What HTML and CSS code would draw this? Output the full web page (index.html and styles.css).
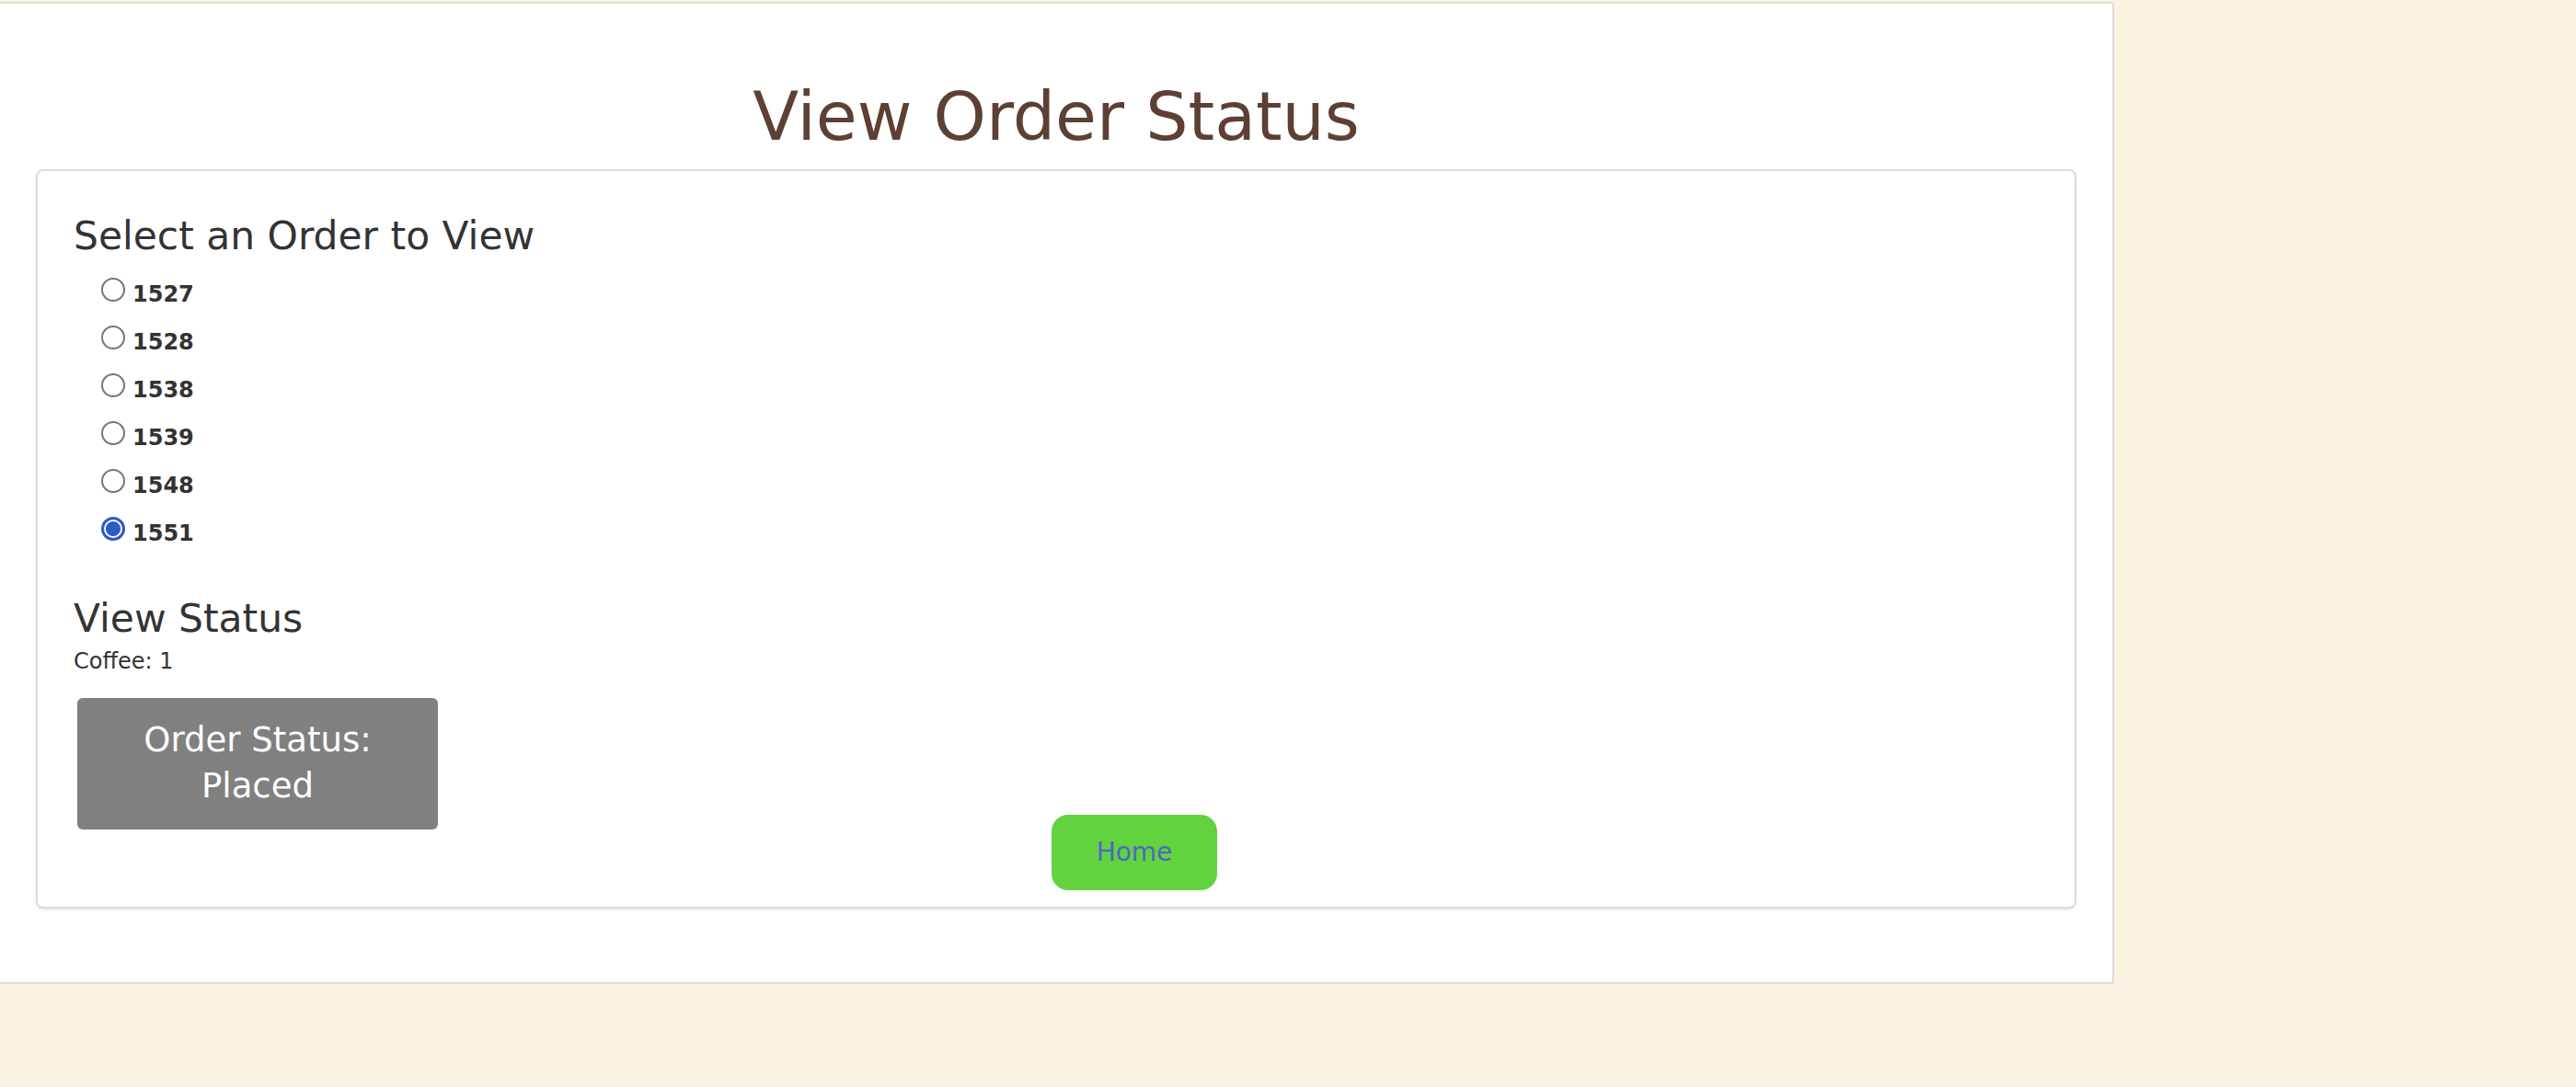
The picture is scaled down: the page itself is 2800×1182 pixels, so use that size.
FILE: index.html
```html
<!DOCTYPE html>
<html lang="en">
<head>
<meta charset="utf-8">
<title>View Order Status</title>
<link rel="stylesheet" href="styles.css">
</head>
<body>
<div class="page">
  <h1 class="title">View Order Status</h1>
  <div class="card">
    <h2 class="section-title">Select an Order to View</h2>
    <div class="orders">
      <label class="order"><input type="radio" name="order" value="1527"><span>1527</span></label>
      <label class="order"><input type="radio" name="order" value="1528"><span>1528</span></label>
      <label class="order"><input type="radio" name="order" value="1538"><span>1538</span></label>
      <label class="order"><input type="radio" name="order" value="1539"><span>1539</span></label>
      <label class="order"><input type="radio" name="order" value="1548"><span>1548</span></label>
      <label class="order"><input type="radio" name="order" value="1551" checked><span>1551</span></label>
    </div>
    <h2 class="section-title status-title">View Status</h2>
    <p class="item">Coffee: 1</p>
    <div class="status-row">
      <div class="status-box">Order Status:<br>Placed</div>
      <a class="home-btn" href="#">Home</a>
    </div>
  </div>
</div>
</body>
</html>
```

FILE: styles.css
```css
html, body {
  margin: 0;
  padding: 0;
}

body {
  background: #fbf3e2;
  font-family: "DejaVu Sans", Verdana, sans-serif;
  color: #333333;
}

.page {
  box-sizing: border-box;
  width: 2298px;
  margin-top: 2px;
  background: #ffffff;
  border: 2px solid #dcdcdc;
  border-left: none;
  border-radius: 0 4px 4px 0;
  padding: 80px 39px 80px 39px;
}

.title {
  margin: 0;
  font-size: 73px;
  line-height: 85px;
  font-weight: normal;
  text-align: center;
  color: #5c4033;
}

.card {
  margin-top: 15px;
  background: #ffffff;
  border: 2px solid #dcdcdc;
  border-radius: 8px;
  box-shadow: 0 2px 3px rgba(0, 0, 0, 0.08);
  padding: 46px 39px 18px 39px;
}

.section-title {
  margin: 0;
  font-size: 42.4px;
  line-height: 49px;
  font-weight: normal;
  color: #333333;
}

.orders {
  margin-top: 12.6px;
  display: flex;
  flex-direction: column;
}

.order {
  display: block;
  padding-left: 30px;
  height: 52px;
  line-height: 52px;
  font-size: 24px;
  font-weight: bold;
  color: #333333;
}

.order input {
  appearance: none;
  -webkit-appearance: none;
  box-sizing: border-box;
  width: 26px;
  height: 26px;
  margin: 0 8px 0 0;
  border: 2px solid #767676;
  border-radius: 50%;
  background: #ffffff;
  vertical-align: baseline;
}

.order input:checked {
  border: 3px solid #2a5cc9;
  background: radial-gradient(circle, #2a5cc9 0, #2a5cc9 7.5px, #ffffff 8.5px);
}

.status-title {
  margin-top: 42.4px;
}

.item {
  margin: 9px 0 0 0;
  font-size: 24px;
  line-height: 27px;
}

.status-row {
  display: flex;
  align-items: flex-start;
  margin-top: 26px;
}

.status-box {
  box-sizing: border-box;
  width: 392px;
  margin-left: 4px;
  padding: 21.5px 10px;
  background: #808080;
  border-radius: 6px;
  color: #ffffff;
  font-size: 37px;
  line-height: 50px;
  text-align: center;
}

.home-btn {
  display: flex;
  align-items: center;
  justify-content: center;
  width: 180px;
  height: 82px;
  margin-top: 127px;
  margin-left: 667px;
  background: #62d23f;
  border-radius: 18px;
  color: #4a69c4;
  font-size: 28px;
  text-decoration: none;
}
```
